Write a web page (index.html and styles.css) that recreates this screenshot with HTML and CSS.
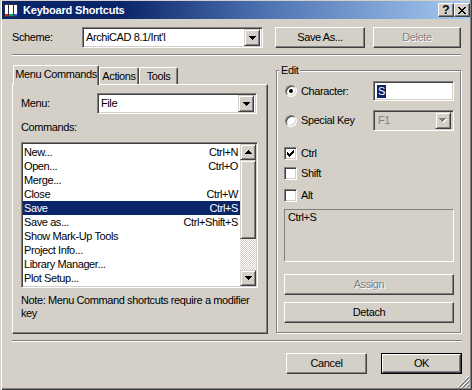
FILE: index.html
```html
<!DOCTYPE html>
<html>
<head>
<meta charset="utf-8">
<title>Keyboard Shortcuts</title>
<link rel="stylesheet" href="styles.css">
</head>
<body>
<div class="window">
  <div class="titlebar">
    <svg class="appicon" width="16" height="16" viewBox="0 0 16 16">
      <rect x="1" y="2" width="14" height="13" fill="#303040"/>
      <rect x="2" y="3" width="3" height="11" fill="#fff"/>
      <rect x="6" y="3" width="4" height="11" fill="#fff"/>
      <rect x="11" y="3" width="3" height="11" fill="#fff"/>
      <rect x="2" y="12" width="3" height="2" fill="#d02020"/>
      <rect x="6" y="12" width="4" height="2" fill="#20a040"/>
      <rect x="11" y="12" width="3" height="2" fill="#3050d0"/>
    </svg>
    <span class="title">Keyboard Shortcuts</span>
    <div class="capbtns">
      <div class="capbtn help">?</div>
      <div class="capbtn close">
        <svg width="8" height="7" viewBox="0 0 8 7"><path d="M0 0h2v1H0zM6 0h2v1H6zM1 1h2v1H1zM5 1h2v1H5zM2 2h4v1H2zM3 3h2v1H3zM2 4h4v1H2zM1 5h2v1H1zM5 5h2v1H5zM0 6h2v1H0zM6 6h2v1H6z" fill="#000"/></svg>
      </div>
    </div>
  </div>

  <div class="content">
    <div class="scheme-row">
      <span class="scheme-lbl">Scheme:</span>
      <div class="combo scheme-combo">
        <span class="combo-text">ArchiCAD 8.1/Int'l</span>
        <span class="drop"><svg width="7" height="4" viewBox="0 0 7 4"><path d="M0 0h7v1H0zM1 1h5v1H1zM2 2h3v1H2zM3 3h1v1H3z" fill="#000"/></svg></span>
      </div>
      <div class="btn saveas">Save As...</div>
      <div class="btn delete disabled">Delete</div>
    </div>

    <div class="sep sep-top"></div>

    <div class="main">
      <div class="tabctl">
        <div class="tabs">
          <div class="tab active">Menu Commands</div>
          <div class="tab t-actions">Actions</div>
          <div class="tab t-tools">Tools</div>
        </div>
        <div class="panel">
          <div class="menu-row">
            <span class="menu-lbl">Menu:</span>
            <div class="combo menu-combo">
              <span class="combo-text">File</span>
              <span class="drop"><svg width="7" height="4" viewBox="0 0 7 4"><path d="M0 0h7v1H0zM1 1h5v1H1zM2 2h3v1H2zM3 3h1v1H3z" fill="#000"/></svg></span>
            </div>
          </div>
          <div class="commands-lbl">Commands:</div>
          <div class="listbox">
            <div class="rows">
              <div class="row"><span>New...</span><span>Ctrl+N</span></div>
              <div class="row"><span>Open...</span><span>Ctrl+O</span></div>
              <div class="row"><span>Merge...</span><span></span></div>
              <div class="row"><span>Close</span><span>Ctrl+W</span></div>
              <div class="row selected"><span>Save</span><span>Ctrl+S</span></div>
              <div class="row"><span>Save as...</span><span>Ctrl+Shift+S</span></div>
              <div class="row"><span>Show Mark-Up Tools</span><span></span></div>
              <div class="row"><span>Project Info...</span><span></span></div>
              <div class="row"><span>Library Manager...</span><span></span></div>
              <div class="row"><span>Plot Setup...</span><span></span></div>
            </div>
            <div class="vscroll">
              <div class="sbtn"><svg width="7" height="4" viewBox="0 0 7 4"><path d="M3 0h1v1H3zM2 1h3v1H2zM1 2h5v1H1zM0 3h7v1H0z" fill="#000"/></svg></div>
              <div class="thumb"></div>
              <div class="track"></div>
              <div class="sbtn"><svg width="7" height="4" viewBox="0 0 7 4"><path d="M0 0h7v1H0zM1 1h5v1H1zM2 2h3v1H2zM3 3h1v1H3z" fill="#000"/></svg></div>
            </div>
          </div>
          <div class="note">Note: Menu Command shortcuts require a modifier<br>key</div>
        </div>
      </div>

      <div class="group">
        <span class="group-lbl">Edit</span>
        <div class="opt-row">
          <span class="radio checked"></span>
          <span class="opt-lbl">Character:</span>
          <div class="textbox"><span class="sel">S</span></div>
        </div>
        <div class="opt-row special">
          <span class="radio"></span>
          <span class="opt-lbl">Special Key</span>
          <div class="combo dis-combo">
            <span class="combo-text">F1</span>
            <span class="drop"><svg width="8" height="5" viewBox="0 0 8 5"><path d="M1 1h7v1H1zM2 2h5v1H2zM3 3h3v1H3zM4 4h1v1H4z" fill="#fff"/><path d="M0 0h7v1H0zM1 1h5v1H1zM2 2h3v1H2zM3 3h1v1H3z" fill="#808080"/></svg></span>
          </div>
        </div>
        <div class="chk-row r-ctrl">
          <span class="chk"><svg width="7" height="7" viewBox="0 0 7 7"><path d="M6 0h1v1H6zM5 1h2v1H5zM0 2h1v1H0zM4 2h3v1H4zM0 3h2v1H0zM3 3h3v1H3zM0 4h5v1H0zM1 5h3v1H1zM2 6h1v1H2z" fill="#000"/></svg></span>
          <span>Ctrl</span>
        </div>
        <div class="chk-row r-shift"><span class="chk"></span><span>Shift</span></div>
        <div class="chk-row r-alt"><span class="chk"></span><span>Alt</span></div>
        <div class="static">Ctrl+S</div>
        <div class="btn wide assign disabled">Assign</div>
        <div class="btn wide detach">Detach</div>
      </div>
    </div>

    <div class="sep sep-bottom"></div>

    <div class="footer">
      <div class="btn dlg">Cancel</div>
      <div class="btn dlg default"><span class="inner">OK</span></div>
    </div>
  </div>

  <svg class="grip" width="12" height="12" viewBox="0 0 12 12">
    <path d="M11 0L0 11" stroke="#fff" stroke-width="1"/>
    <path d="M11.5 0.5L0.5 11.5M11.5 1.5L1.5 11.5" stroke="#808080" stroke-width="1"/>
    <path d="M11 4L4 11" stroke="#fff" stroke-width="1"/>
    <path d="M11.5 4.5L4.5 11.5M11.5 5.5L5.5 11.5" stroke="#808080" stroke-width="1"/>
    <path d="M11 8L8 11" stroke="#fff" stroke-width="1"/>
    <path d="M11.5 8.5L8.5 11.5M11.5 9.5L9.5 11.5" stroke="#808080" stroke-width="1"/>
  </svg>
</div>
</body>
</html>
```

FILE: styles.css
```css
* { box-sizing: border-box; margin: 0; padding: 0; }
html, body { margin: 0; background: #d4d0c8; }
body {
  font-family: "Liberation Sans", Arial, sans-serif;
  font-size: 11px;
  line-height: 13px;
  letter-spacing: -0.4px;
  color: #000;
}

.window {
  position: relative;
  width: 472px;
  height: 390px;
  background: #d4d0c8;
  padding: 1px 2px 2px 2px;
  box-shadow: inset 1px 0 #d4d0c8, inset 2px 0 #fff, inset -1px -1px #404040, inset -2px -2px #808080;
  display: flex;
  flex-direction: column;
  overflow: hidden;
}

/* Title bar */
.titlebar {
  height: 18px;
  display: flex;
  align-items: center;
  padding-left: 1px;
  background: linear-gradient(to right, #0a246a 0%, #0a246a 25%, #4a70b0 55%, #a6caf0 100%);
}
.appicon { flex: none; }
.title {
  margin-left: 4px;
  color: #fff;
  font-weight: bold;
  letter-spacing: -0.2px;
  flex: 1;
}
.capbtns { display: flex; }
.capbtn {
  width: 16px;
  height: 14px;
  background: #d4d0c8;
  border: 1px solid;
  border-color: #fff #404040 #404040 #fff;
  box-shadow: inset -1px -1px #808080;
  display: flex;
  align-items: center;
  justify-content: center;
}
.capbtn.help { font-weight: bold; font-size: 12px; letter-spacing: 0; }

.content {
  display: flex;
  flex-direction: column;
  padding: 0 8px 0 10px;
}

/* generic controls */
.btn {
  height: 21px;
  display: flex;
  align-items: center;
  justify-content: center;
  background: #d4d0c8;
  border: 1px solid;
  border-color: #fff #404040 #404040 #fff;
  box-shadow: inset -1px -1px #808080;
}
.btn.disabled { color: #808080; text-shadow: 1px 1px #fff; }

.combo {
  height: 21px;
  display: flex;
  align-items: center;
  background: #fff;
  border: 1px solid;
  border-color: #808080 #fff #fff #808080;
  box-shadow: inset 1px 1px #404040, inset -1px -1px #d4d0c8;
  padding: 2px;
}
.combo-text { flex: 1; padding-left: 1px; white-space: nowrap; }
.drop {
  width: 16px;
  height: 17px;
  flex: none;
  display: flex;
  align-items: center;
  justify-content: center;
  background: #d4d0c8;
  border: 1px solid;
  border-color: #d4d0c8 #404040 #404040 #d4d0c8;
  box-shadow: inset 1px 1px #fff, inset -1px -1px #808080;
}

.sep {
  height: 2px;
  border-top: 1px solid #808080;
  border-bottom: 1px solid #fff;
}

/* Scheme row */
.scheme-row {
  display: flex;
  align-items: center;
  height: 21px;
  margin-top: 8px;
}
.scheme-lbl { width: 70px; }
.scheme-combo { width: 181px; }
.saveas { width: 90px; margin-left: 12px; }
.delete { width: 88px; margin-left: 8px; }

.sep-top { width: 449px; margin-top: 6px; }

/* main */
.main {
  display: flex;
  align-items: flex-start;
  margin-top: 9px;
}
.tabctl { width: 256px; }
.tabs {
  display: flex;
  align-items: flex-end;
  height: 19px;
  padding-left: 1px;
  position: relative;
  z-index: 1;
}
.tab {
  height: 17px;
  display: flex;
  align-items: center;
  justify-content: center;
  background: #d4d0c8;
  border-top: 1px solid #fff;
  border-left: 1px solid #fff;
  border-right: 1px solid #404040;
  box-shadow: inset -1px 0 #808080;
  border-radius: 2px 2px 0 0;
  white-space: nowrap;
}
.tab.active {
  height: 20px;
  width: 86px;
  margin-bottom: -1px;
  padding-bottom: 2px;
}
.t-actions { width: 40px; }
.t-tools { width: 39px; }

.panel {
  height: 250px;
  border: 1px solid;
  border-color: #fff #404040 #404040 #fff;
  box-shadow: inset -1px -1px #808080;
  padding: 8px 0 0 8px;
}
.menu-row { display: flex; align-items: center; height: 21px; }
.menu-lbl { width: 76px; }
.menu-combo { width: 160px; }
.commands-lbl { margin-top: 7px; }

.listbox {
  width: 237px;
  height: 146px;
  margin-top: 8px;
  display: flex;
  background: #fff;
  border: 1px solid;
  border-color: #808080 #fff #fff #808080;
  box-shadow: inset 1px 1px #404040, inset -1px -1px #d4d0c8;
  padding: 1px;
}
.rows { flex: 1; padding-top: 1px; }
.row {
  height: 14px;
  line-height: 14px;
  display: flex;
  justify-content: space-between;
  padding: 0 2px 0 1px;
  white-space: nowrap;
}
.row.selected { background: #0a246a; color: #fff; }

.vscroll {
  width: 16px;
  display: flex;
  flex-direction: column;
}
.sbtn, .thumb {
  background: #d4d0c8;
  border: 1px solid;
  border-color: #d4d0c8 #404040 #404040 #d4d0c8;
  box-shadow: inset 1px 1px #fff, inset -1px -1px #808080;
}
.sbtn {
  height: 16px;
  display: flex;
  align-items: center;
  justify-content: center;
}
.thumb { height: 79px; }
.track {
  flex: 1;
  background: repeating-conic-gradient(#fff 0 25%, #d4d0c8 0 50%) 0 0 / 2px 2px;
}

.note { margin-top: 6px; white-space: nowrap; }

/* group */
.group {
  position: relative;
  width: 185px;
  height: 263px;
  margin-left: 8px;
  margin-top: 5px;
  border: 1px solid #808080;
  box-shadow: inset 1px 1px #fff, 1px 1px #fff;
  padding: 10px 6px 0 8px;
  display: flex;
  flex-direction: column;
}
.group-lbl {
  position: absolute;
  top: -7px;
  left: 2px;
  padding: 0 2px;
  background: #d4d0c8;
}
.opt-row { display: flex; align-items: center; height: 20px; }
.opt-row.special { height: 21px; margin-top: 9px; }
.radio {
  position: relative;
  width: 12px;
  height: 12px;
  flex: none;
  border-radius: 50%;
  background: #fff;
  border: 1px solid;
  border-color: #808080 #fff #fff #808080;
  box-shadow: inset 1px 1px #404040, inset -1px -1px #d4d0c8;
  margin-right: 4px;
}
.radio.checked::after {
  content: "";
  position: absolute;
  left: 3px;
  top: 3px;
  width: 4px;
  height: 4px;
  border-radius: 50%;
  background: #000;
}
.opt-lbl { width: 72px; white-space: nowrap; }
.textbox {
  width: 81px;
  height: 20px;
  background: #fff;
  border: 1px solid;
  border-color: #808080 #fff #fff #808080;
  box-shadow: inset 1px 1px #404040, inset -1px -1px #d4d0c8;
  padding: 3px 0 0 3px;
  display: flex;
  align-items: flex-start;
}
.sel { background: #0a246a; color: #fff; padding: 0 1px; letter-spacing: 0; }
.dis-combo { width: 81px; background: #d4d0c8; color: #808080; }
.dis-combo .combo-text { padding-left: 2px; }

.chk-row {
  display: flex;
  align-items: center;
  height: 13px;
  margin-left: -1px;
}
.r-ctrl { margin-top: 16px; }
.r-shift { margin-top: 7px; }
.r-alt { margin-top: 9px; }
.chk {
  width: 13px;
  height: 13px;
  flex: none;
  margin-right: 4px;
  background: #fff;
  border: 1px solid;
  border-color: #808080 #fff #fff #808080;
  box-shadow: inset 1px 1px #404040, inset -1px -1px #d4d0c8;
  display: flex;
  align-items: center;
  justify-content: center;
}
.static {
  width: 170px;
  height: 53px;
  margin-top: 7px;
  margin-left: -1px;
  border: 1px solid;
  border-color: #808080 #fff #fff #808080;
  padding: 1px 3px;
}
.btn.wide { width: 170px; margin-left: -1px; }
.assign { margin-top: 12px; }
.detach { margin-top: 7px; }

.sep-bottom { width: 450px; margin-top: 6px; }

.footer {
  display: flex;
  justify-content: flex-end;
  margin-top: 11px;
}
.btn.dlg { width: 81px; }
.btn.dlg + .btn.dlg { margin-left: 14px; }
.btn.default {
  border: 1px solid #000;
  box-shadow: none;
  padding: 0;
}
.btn.default .inner {
  width: 100%;
  height: 100%;
  display: flex;
  align-items: center;
  justify-content: center;
  border: 1px solid;
  border-color: #fff #404040 #404040 #fff;
  box-shadow: inset -1px -1px #808080;
}

.grip {
  position: absolute;
  right: 2px;
  bottom: 2px;
}
```
